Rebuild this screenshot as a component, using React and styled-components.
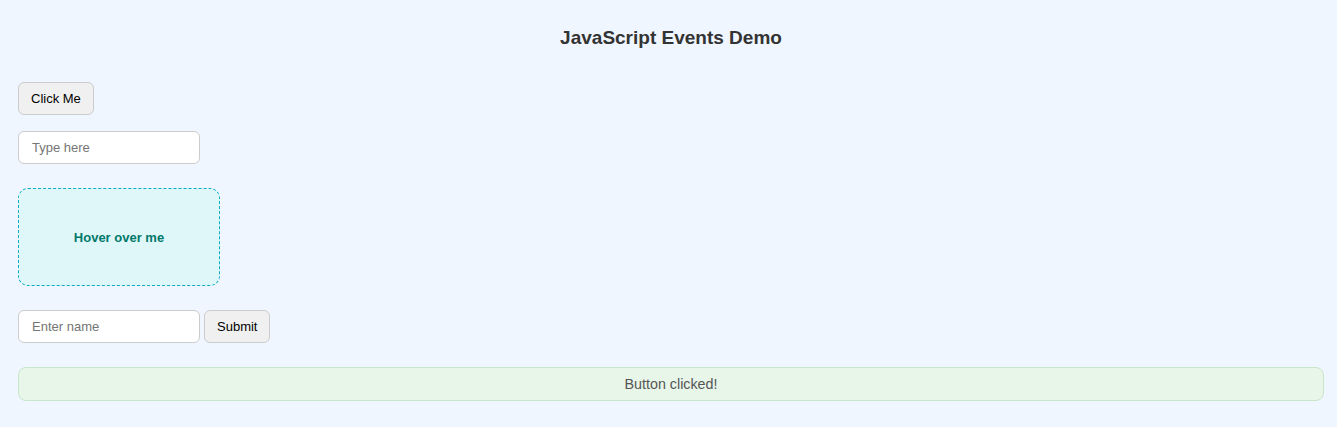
import React from 'react';
import styled, { createGlobalStyle } from 'styled-components';

const GlobalStyle = createGlobalStyle`
  html, body {
    margin: 0;
    padding: 0;
    background: #eff6ff;
  }
  body {
    font-family: "Liberation Sans", Arial, sans-serif;
  }
`;

const Page = styled.div`
  display: flex;
  flex-direction: column;
  align-items: flex-start;
  padding: 0 13px 26px 18px;
`;

const Title = styled.h2`
  align-self: stretch;
  margin: 27px 0 33px;
  font-size: 19px;
  line-height: 22px;
  font-weight: bold;
  text-align: center;
  color: #333;
`;

const Button = styled.button`
  box-sizing: border-box;
  height: 33px;
  padding: 0 12px;
  font-family: "Liberation Sans", Arial, sans-serif;
  font-size: 13px;
  color: #000;
  background: #f0f0f0;
  border: 1px solid #ccc;
  border-radius: 6px;
  margin-bottom: ${(p) => p.$mb || 0}px;
`;

const Input = styled.input`
  box-sizing: border-box;
  width: 182px;
  height: 33px;
  padding: 0 13px;
  font-family: "Liberation Sans", Arial, sans-serif;
  font-size: 13px;
  background: #fff;
  border: 1px solid #ccc;
  border-radius: 6px;
  margin-bottom: ${(p) => p.$mb || 0}px;

  &::placeholder {
    color: #757575;
  }
`;

const HoverBox = styled.div`
  box-sizing: border-box;
  width: 202px;
  height: 98px;
  display: flex;
  align-items: center;
  justify-content: center;
  background: #e0f7fa;
  border: 1px dashed #00acc1;
  border-radius: 10px;
  color: #00796b;
  font-size: 13px;
  font-weight: bold;
  margin-bottom: 24px;
`;

const Form = styled.form`
  display: flex;
  gap: 4px;
  margin-bottom: 24px;
`;

const Output = styled.div`
  box-sizing: border-box;
  align-self: stretch;
  height: 34px;
  display: flex;
  align-items: center;
  justify-content: center;
  background: #e8f5e9;
  border: 1px solid #c8e6c9;
  border-radius: 8px;
  color: #555;
  font-size: 14.3px;
`;

export default function App() {
  return (
    <>
      <GlobalStyle />
      <Page>
        <Title>JavaScript Events Demo</Title>
        <Button type="button" $mb={16}>Click Me</Button>
        <Input type="text" placeholder="Type here" $mb={24} />
        <HoverBox>Hover over me</HoverBox>
        <Form onSubmit={(e) => e.preventDefault()}>
          <Input type="text" placeholder="Enter name" />
          <Button type="submit">Submit</Button>
        </Form>
        <Output>Button clicked!</Output>
      </Page>
    </>
  );
}
